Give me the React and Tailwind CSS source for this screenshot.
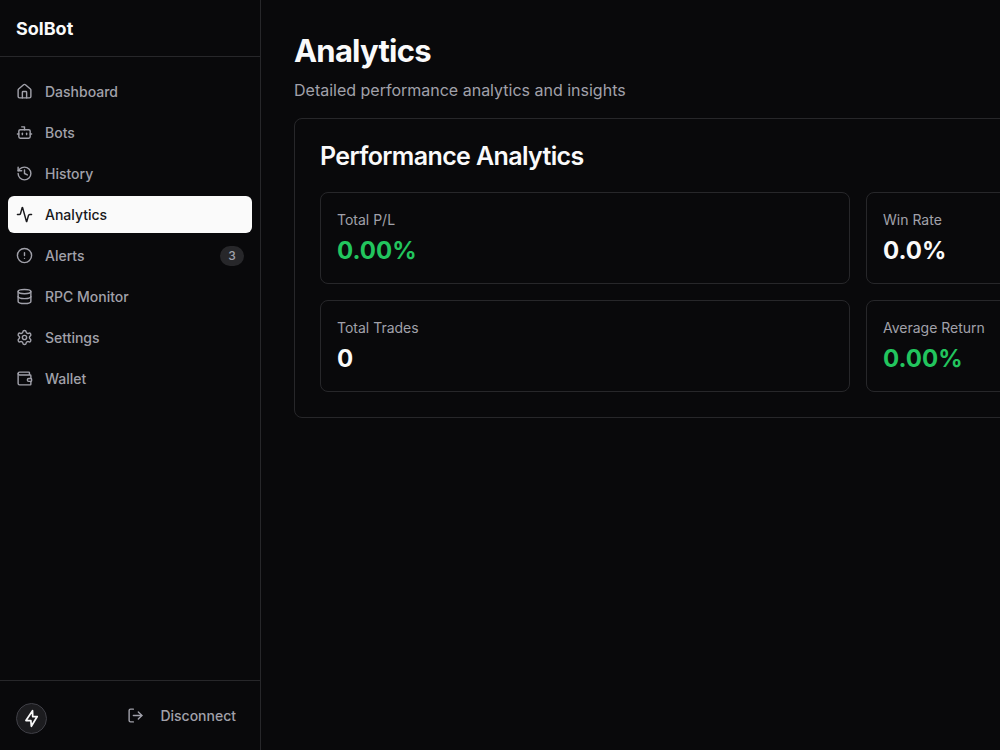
import React from 'react';
import {
  Activity,
  Bot,
  CircleAlert,
  Database,
  History,
  House,
  LogOut,
  Settings,
  Wallet,
} from 'lucide-react';

const navItems = [
  { label: 'Dashboard', icon: House },
  { label: 'Bots', icon: Bot },
  { label: 'History', icon: History },
  { label: 'Analytics', icon: Activity },
  { label: 'Alerts', icon: CircleAlert, badge: 3 },
  { label: 'RPC Monitor', icon: Database },
  { label: 'Settings', icon: Settings },
  { label: 'Wallet', icon: Wallet },
];

const stats = [
  { label: 'Total P/L', value: '0.00%', positive: true },
  { label: 'Win Rate', value: '0.0%' },
  { label: 'Total Trades', value: '0' },
  { label: 'Average Return', value: '0.00%', positive: true },
];

const BoltIcon = () => (
  <svg width="19" height="19" viewBox="0 0 24 24" fill="none" stroke="currentColor" strokeWidth="2.2" strokeLinejoin="round">
    <path d="M13.3 2.2 5 14.6h6.2l.6 7.2 7.4-12.3h-5.7z" />
  </svg>
);

const NavItem = ({ label, icon: Icon, badge, active }) => (
  <a
    href="#"
    aria-current={active ? 'page' : undefined}
    className={`flex h-[37px] items-center gap-3 rounded-md px-2 text-[14px] font-medium ${
      active ? 'bg-[#fafafa] text-[#18181b]' : 'text-[#a1a1aa] hover:text-white'
    }`}
  >
    <Icon size={17} strokeWidth={2} />
    <span className="flex-1">{label}</span>
    {badge && (
      <span className="flex h-5 w-6 items-center justify-center rounded-full bg-[#27272a] text-[12px]">
        {badge}
      </span>
    )}
  </a>
);

const Sidebar = () => (
  <aside className="flex w-[261px] shrink-0 flex-col border-r border-[#27272a]">
    <div className="flex h-[57px] items-center border-b border-[#27272a] px-4">
      <span className="text-[18px] font-bold text-[#fafafa]">SolBot</span>
    </div>

    <nav className="flex flex-1 flex-col gap-1 px-2 py-4">
      {navItems.map((item) => (
        <NavItem key={item.label} {...item} active={item.label === 'Analytics'} />
      ))}
    </nav>

    <div className="flex items-start justify-between border-t border-[#27272a] px-4 pt-4 pb-4">
      <button
        aria-label="Quick actions"
        className="mt-1.5 flex size-[31px] items-center justify-center rounded-full border border-[#3f3f46] bg-[#1c1c1f] text-[#fafafa]"
      >
        <BoltIcon />
      </button>
      <button className="flex h-[37px] items-center gap-4 px-2 text-[14px] font-medium text-[#a1a1aa] hover:text-white">
        <LogOut size={17} strokeWidth={2} />
        Disconnect
      </button>
    </div>
  </aside>
);

const StatCard = ({ label, value, positive }) => (
  <div className="h-[92px] rounded-lg border border-[#27272a] px-4 pt-4">
    <p className="text-[14px] leading-[22px] text-[#a1a1aa]">{label}</p>
    <p className={`text-[24px] leading-10 font-bold ${positive ? 'text-[#22c55e]' : 'text-[#fafafa]'}`}>
      {value}
    </p>
  </div>
);

const App = () => (
  <div className="flex min-h-screen bg-[#09090b] font-['Inter',sans-serif] text-[#fafafa]">
    <Sidebar />

    <main className="min-w-0 flex-1 overflow-hidden">
      {/* wide content runs off the right edge on small windows */}
      <div className="min-w-[1194px] px-[33px] pt-8">
        <h1 className="text-[31px] leading-[38px] font-bold tracking-tight">Analytics</h1>
        <p className="mt-2 text-[16px] leading-6 text-[#a1a1aa]">
          Detailed performance analytics and insights
        </p>

        <section className="mt-4 rounded-lg border border-[#27272a] p-[25px]">
          <h2 className="mb-6 text-[25px] leading-6 font-semibold tracking-tight">Performance Analytics</h2>
          <div className="grid grid-cols-2 gap-4">
            {stats.map((stat) => (
              <StatCard key={stat.label} {...stat} />
            ))}
          </div>
        </section>
      </div>
    </main>
  </div>
);

export default App;
